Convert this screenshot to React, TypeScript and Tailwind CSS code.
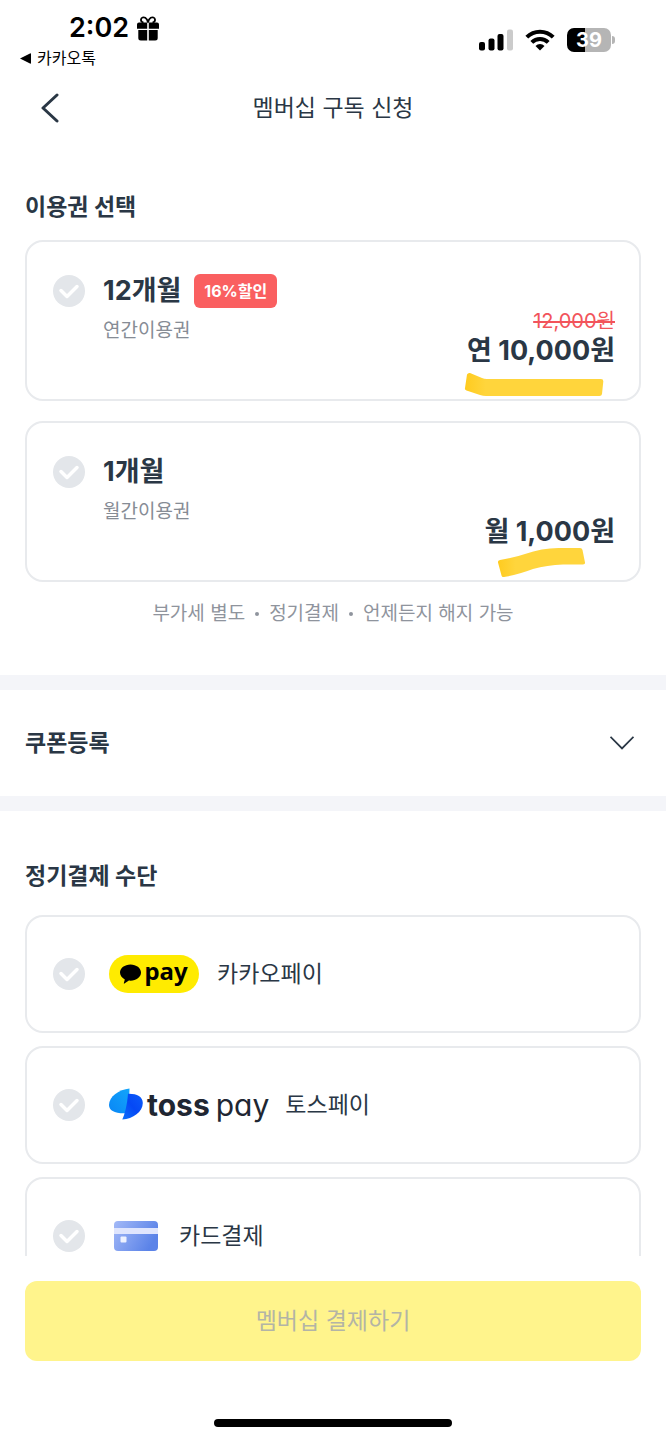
import React, { useState } from "react";

interface Plan {
  id: string;
  title: string;
  subtitle: string;
  discount?: string;
  originalPrice?: string;
  price: string;
}

interface PayMethod {
  id: string;
  label: string;
  logo: React.ReactNode;
}

const plans: Plan[] = [
  {
    id: "yearly",
    title: "12개월",
    subtitle: "연간이용권",
    discount: "16%할인",
    originalPrice: "12,000원",
    price: "연 10,000원",
  },
  { id: "monthly", title: "1개월", subtitle: "월간이용권", price: "월 1,000원" },
];

const notices = ["부가세 별도", "정기결제", "언제든지 해지 가능"];

const payMethods: PayMethod[] = [
  { id: "kakao", label: "카카오페이", logo: <KakaoPayLogo /> },
  { id: "toss", label: "토스페이", logo: <TossPayLogo /> },
  { id: "card", label: "카드결제", logo: <CardIcon /> },
];

function KakaoPayLogo() {
  return (
    <span className="mr-[2px] flex h-[38px] w-[90px] items-center justify-center gap-[3px] rounded-full bg-[#ffeb00] text-black">
      <svg width="21" height="20" viewBox="0 0 21 20" fill="currentColor" aria-hidden="true">
        <path d="M10.5 0.5C4.7 0.5 0 4.1 0 8.6c0 2.9 1.9 5.4 4.8 6.8l-1 3.8c-.1.4.3.7.6.4l4.5-3c.5.1 1.1.1 1.6.1 5.8 0 10.5-3.6 10.5-8.1S16.3.5 10.5.5z" />
      </svg>
      <span className="pb-[6px] font-['Noto_Sans'] text-2xl leading-8 font-bold">pay</span>
    </span>
  );
}

function TossPayLogo() {
  return (
    <span className="flex items-center text-[#202632]">
      <svg className="-mt-[2px]" width="34" height="32" viewBox="0 0 34 32" aria-hidden="true">
        <defs>
          <linearGradient id="tossLight" x1="0" y1="1" x2="1" y2="0">
            <stop offset="0" stopColor="#0a86f5" />
            <stop offset="1" stopColor="#12a5fb" />
          </linearGradient>
          <linearGradient id="tossDark" x1="1" y1="0" x2="0" y2="1">
            <stop offset="0" stopColor="#0b5cf9" />
            <stop offset="0.5" stopColor="#0548f5" />
            <stop offset="1" stopColor="#0b70fb" />
          </linearGradient>
        </defs>
        <path d="M20.5 0.500C10 1.500 0 8.500 0 17c0 5.500 5.500 8.700 17 8.300L20 14z" fill="url(#tossLight)" />
        <path d="M19 5.800C27.500 5.500 33.800 8.500 33.800 15 33.800 24 24 30.800 13.300 31.500 15.800 26 18.200 17 19 5.800z" fill="url(#tossDark)" />
      </svg>
      <span className="ml-1 font-[Inter] text-[30px] leading-8 font-bold">toss</span>
      <span className="ml-[6px] font-[Inter] text-[30px] leading-8 font-normal [font-feature-settings:'cv11']">pay</span>
    </span>
  );
}

function CardIcon() {
  return (
    <svg className="mx-[5px]" width="44" height="30" viewBox="0 0 44 30" aria-hidden="true">
      <defs>
        <linearGradient id="cardFill" x1="0" y1="0" x2="1" y2="0.4">
          <stop offset="0" stopColor="#a3b9f7" />
          <stop offset="1" stopColor="#5b83e8" />
        </linearGradient>
      </defs>
      <rect width="44" height="30" rx="4" fill="url(#cardFill)" />
      <rect y="7" width="44" height="6" fill="#dfe5fd" />
      <rect x="6.500" y="15.500" width="6" height="6" rx="1" fill="#eef2ff" />
    </svg>
  );
}

function StatusBar() {
  return (
    <div className="flex h-[72px] shrink-0 justify-between pr-[51px] pl-5 text-black">
      <div>
        <div className="mt-3 flex h-8 items-center gap-2 pl-[49px]">
          <span className="font-[Inter] text-[27px] leading-8 font-semibold">2:02</span>
          <svg width="22" height="25" viewBox="0 0 22 25" fill="currentColor" aria-hidden="true">
            <path d="M6.500 6.500C4.500 6 3.800 4.800 4 3.300 4.300 1.500 6.500.8 8.300 1.800 9.800 2.600 10.600 4.500 11 6.500c.4-2 1.200-3.900 2.700-4.700 1.800-1 4-.3 4.300 1.500.2 1.500-.5 2.700-2.500 3.200" fill="none" stroke="currentColor" strokeWidth="1.800" />
            <path d="M2 6.500h8.200v6.200H0V8.500a2 2 0 0 1 2-2zM11.800 6.500H20a2 2 0 0 1 2 2v4.200H11.800zM1.300 14.100h8.900v10.400H3.800a2.500 2.500 0 0 1-2.500-2.500zM11.800 14.100h8.900V22a2.500 2.500 0 0 1-2.500 2.500h-6.400z" />
          </svg>
        </div>
        <a href="#kakaotalk" className="flex h-7 items-center gap-[6px] text-base leading-6">
          <svg width="11" height="11" viewBox="0 0 11 11" fill="currentColor" aria-hidden="true">
            <path d="M0 5.500L10 0.500Q11 0 11 1v9q0 1-1 .5z" />
          </svg>
          카카오톡
        </a>
      </div>
      <div className="mt-[26px] flex h-7 items-center gap-3">
        <svg width="34" height="22" viewBox="0 0 34 22" aria-hidden="true">
          <rect x="0" y="13" width="6" height="8.500" rx="2" />
          <rect x="9.500" y="9.500" width="6" height="12" rx="2" />
          <rect x="18.500" y="5" width="6" height="16.500" rx="2" />
          <rect x="28" y="0.500" width="6" height="21" rx="2" fill="#cbcbcb" />
        </svg>
        <svg width="30" height="22" viewBox="0 0 30 22" fill="none" stroke="#000" strokeWidth="4" aria-hidden="true">
          <path d="M1.800 8.200a18.600 18.600 0 0 1 26.400 0" />
          <path d="M6.800 13.300a11.600 11.600 0 0 1 16.400 0" />
          <path d="M15 21.500l-4.500-4.600a6.400 6.400 0 0 1 9 0z" fill="#000" stroke="none" />
        </svg>
        <div className="flex items-center gap-[1px]">
          <span className="flex h-6 w-11 items-center justify-center rounded-[7px] bg-linear-to-r from-black from-40% to-[#b5b5b5] to-40% font-[Inter] text-xl leading-6 font-bold text-white">
            39
          </span>
          <span className="h-2 w-[3px] rounded-r-full bg-[#b5b5b5]"></span>
        </div>
      </div>
    </div>
  );
}

function CheckRadio(props: React.InputHTMLAttributes<HTMLInputElement>) {
  return (
    <span className="relative size-8 shrink-0">
      <input
        type="radio"
        className="block size-8 cursor-pointer appearance-none rounded-full bg-[#e3e6ea] checked:bg-[#2a3745]"
        {...props}
      />
      <svg className="pointer-events-none absolute inset-0" width="32" height="32" viewBox="0 0 32 32" fill="none" stroke="#fff" strokeWidth="3.500" strokeLinecap="round" strokeLinejoin="round" aria-hidden="true">
        <path d="M8 15.500l6 6L24 11.500" />
      </svg>
    </span>
  );
}

// Marker strokes under the prices
function Highlight({ id }: { id: string }) {
  if (id === "yearly") {
    return (
      <svg className="absolute right-[35px] bottom-[2px]" width="140" height="25" viewBox="0 0 140 25" aria-hidden="true">
        <defs>
          <linearGradient id="markerYearly">
            <stop offset="0" stopColor="#ffcb1f" />
            <stop offset="0.15" stopColor="#ffd53c" />
          </linearGradient>
        </defs>
        <path d="M3 2.500Q4 .5 6 1l12 5q2 1 5 1h114q2.500 0 2.300 2.500L138 22q-.3 2-2.500 2H22q-3 0-6-1L2.500 18.500Q.5 18 1 16z" fill="url(#markerYearly)" />
      </svg>
    );
  }
  return (
    <svg className="absolute right-[53px] bottom-[2px]" width="89" height="31" viewBox="0 0 89 31" aria-hidden="true">
      <defs>
        <linearGradient id="markerMonthly">
          <stop offset="0" stopColor="#ffcb1f" />
          <stop offset="0.2" stopColor="#ffd53c" />
        </linearGradient>
      </defs>
      <path d="M1 15.500Q.500 13.500 3 13 18 10.500 28 7 46 .500 64 1h19q2 0 2.500 2L88 15.500q.5 2-2 2H66Q50 18 36 22 20 28 7 30q-2 .5-2.500-1.500z" fill="url(#markerMonthly)" />
    </svg>
  );
}

export default function App() {
  const [selectedPlan, setSelectedPlan] = useState("");
  const [selectedMethod, setSelectedMethod] = useState("");

  return (
    <div className="flex h-screen flex-col bg-white font-[Inter,'Noto_Sans_CJK_KR',sans-serif] text-[#2a3745]">
      <StatusBar />

      <header className="grid h-[72px] shrink-0 grid-cols-[48px_1fr_48px] items-center px-[26px]">
        <button type="button" aria-label="뒤로" className="flex size-12 cursor-pointer items-center justify-center">
          <svg width="18" height="30" viewBox="0 0 18 30" fill="none" stroke="currentColor" strokeWidth="3" strokeLinecap="round" strokeLinejoin="round" aria-hidden="true">
            <path d="M16 2L2 15l14 13" />
          </svg>
        </button>
        <h1 className="text-center text-[23px] leading-9">멤버십 구독 신청</h1>
      </header>

      <main className="min-h-0 flex-1 overflow-y-auto [scrollbar-width:none]">
        <section className="px-[25px] pt-[45px] pb-[49px]">
          <h2 className="text-[23px] leading-9 font-bold">이용권 선택</h2>
          <div className="mt-[15px] flex flex-col gap-5">
            {plans.map((plan) => (
              <label
                key={plan.id}
                className="relative flex min-h-[161px] cursor-pointer gap-[18px] rounded-[18px] border-2 border-[#e8eaed] px-[26px] pt-[33px] pb-[30px]"
              >
                <CheckRadio
                  name="plan"
                  value={plan.id}
                  checked={selectedPlan === plan.id}
                  onChange={() => setSelectedPlan(plan.id)}
                />
                <span className="flex-1">
                  <span className="flex h-8 items-center gap-[13px]">
                    <span className="text-[27px] leading-9 font-bold">{plan.title}</span>
                    {plan.discount && (
                      <span className="rounded-md bg-[#fa5f60] px-[10px] text-base leading-[34px] font-bold text-white">
                        {plan.discount}
                      </span>
                    )}
                  </span>
                  <span className="mt-3 block text-[19px] leading-6 text-[#868c95]">{plan.subtitle}</span>
                </span>
                <span className="-mr-[2px] self-end text-right">
                  {plan.originalPrice && (
                    <del className="block text-xl leading-6 text-[#f2545b]">{plan.originalPrice}</del>
                  )}
                  <strong className="block text-[27px] leading-9 font-bold">{plan.price}</strong>
                </span>
                <Highlight id={plan.id} />
              </label>
            ))}
          </div>
          <p className="mt-5 flex items-center justify-center gap-[10px] text-[19px] leading-6 text-[#8f949d]">
            {notices.map((notice, idx) => (
              <React.Fragment key={notice}>
                {idx > 0 && <span className="size-1 rounded-full bg-[#8f949d]"></span>}
                <span>{notice}</span>
              </React.Fragment>
            ))}
          </p>
        </section>

        <section className="border-y-[15px] border-[#f4f5f9]">
          <h2>
            <button type="button" aria-expanded="false" className="flex h-[106px] w-full cursor-pointer items-center justify-between pr-8 pl-[25px] text-[23px] leading-9 font-bold">
              쿠폰등록
              <svg width="24" height="14" viewBox="0 0 24 14" fill="none" stroke="currentColor" strokeWidth="1.800" aria-hidden="true">
                <path d="M0.500 0.800L12 12.500 23.500 0.800" />
              </svg>
            </button>
          </h2>
        </section>

        <section className="px-[25px] pt-[47px] pb-8">
          <h2 className="text-[23px] leading-9 font-bold">정기결제 수단</h2>
          <div className="mt-[21px] flex flex-col gap-[13px]">
            {payMethods.map((method) => (
              <label
                key={method.id}
                className="flex h-[118px] cursor-pointer items-center rounded-[18px] border-2 border-[#e8eaed] px-[26px]"
              >
                <CheckRadio
                  name="method"
                  value={method.id}
                  checked={selectedMethod === method.id}
                  onChange={() => setSelectedMethod(method.id)}
                />
                <span className="ml-6">{method.logo}</span>
                <span className="ml-4 text-[23px] leading-9">{method.label}</span>
              </label>
            ))}
          </div>
        </section>
      </main>

      <footer className="shrink-0 px-[25px] pt-[25px] pb-[13px]">
        <button
          type="submit"
          disabled={!selectedPlan || !selectedMethod}
          className="h-20 w-full rounded-xl bg-[#fff48c] text-[23px] leading-9 disabled:text-[#b3b4a6]"
        >
          멤버십 결제하기
        </button>
        <div className="mx-auto mt-[58px] h-2 w-[238px] rounded-full bg-black"></div>
      </footer>
    </div>
  );
}
